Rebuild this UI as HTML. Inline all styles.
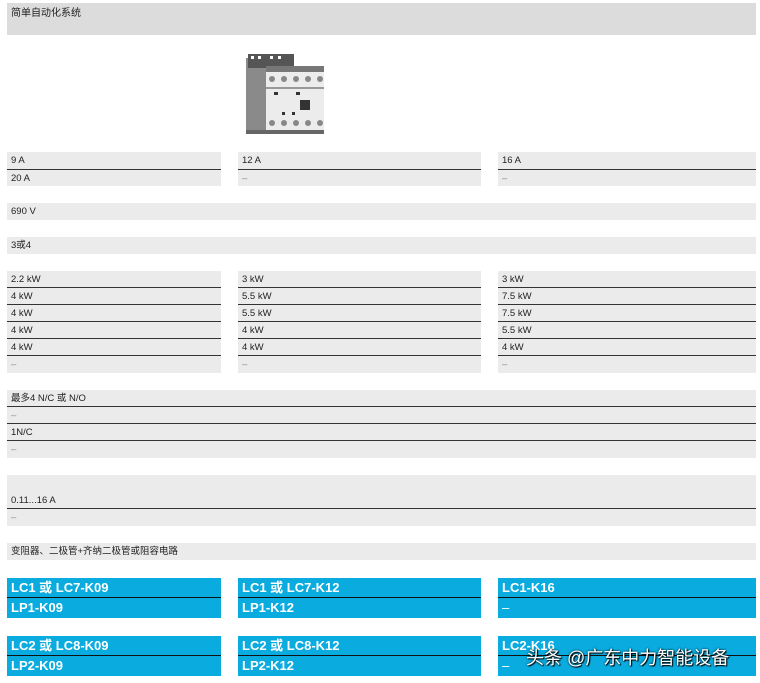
<!DOCTYPE html>
<html><head><meta charset="utf-8"><style>
*{margin:0;padding:0;box-sizing:border-box}
body{width:760px;height:683px;background:#fff;position:relative;overflow:hidden;font-family:"Liberation Sans","Noto Sans CJK SC",sans-serif;color:#222}
.r{position:absolute;background:#ebebeb;font-size:9.5px;padding:3px 0 0 4px;line-height:11px}
.b{border-bottom:1px solid #333}
.c1{left:7px;width:214px}.c2{left:238px;width:243px}.c3{left:498px;width:258px}.f{left:7px;width:749px}
.u{position:absolute;background:#0aabdf;color:#fff;font-weight:bold;font-size:13px;padding:2px 0 0 4px;line-height:16px}
.u.b{border-bottom:1px solid #111}
.d{color:#888}
</style></head><body>
<div class="r f" style="top:3px;height:32px;background:#dcdcdc;font-size:10px;padding-top:5px">简单自动化系统</div>
<svg style="position:absolute;left:244px;top:52px" width="84" height="86" viewBox="0 0 84 86">
<rect x="2" y="6" width="22" height="72" fill="#8a8a8a"/>
<rect x="4" y="2" width="46" height="14" fill="#555"/>
<rect x="7" y="4" width="3" height="3" fill="#fff"/><rect x="14" y="4" width="3" height="3" fill="#fff"/><rect x="26" y="4" width="3" height="3" fill="#fff"/><rect x="34" y="4" width="3" height="3" fill="#fff"/>
<rect x="22" y="14" width="58" height="66" fill="#ececec"/>
<rect x="22" y="14" width="58" height="6" fill="#777"/>
<g fill="#888"><circle cx="28" cy="27" r="3"/><circle cx="40" cy="27" r="3"/><circle cx="52" cy="27" r="3"/><circle cx="64" cy="27" r="3"/><circle cx="76" cy="27" r="3"/>
<circle cx="28" cy="71" r="3"/><circle cx="40" cy="71" r="3"/><circle cx="52" cy="71" r="3"/><circle cx="64" cy="71" r="3"/><circle cx="76" cy="71" r="3"/></g>
<rect x="22" y="35" width="58" height="2" fill="#999"/>
<rect x="30" y="40" width="4" height="3" fill="#333"/><rect x="52" y="40" width="4" height="3" fill="#333"/>
<rect x="56" y="48" width="10" height="10" fill="#333"/>
<rect x="38" y="60" width="3" height="3" fill="#333"/><rect x="48" y="60" width="3" height="3" fill="#333"/>
<rect x="2" y="78" width="78" height="4" fill="#666"/>
</svg>
<div class="r c1 b" style="top:152px;height:18px">9 A</div>
<div class="r c1" style="top:170px;height:16px">20 A</div>
<div class="r c2 b" style="top:152px;height:18px">12 A</div>
<div class="r c2 d" style="top:170px;height:16px">–</div>
<div class="r c3 b" style="top:152px;height:18px">16 A</div>
<div class="r c3 d" style="top:170px;height:16px">–</div>
<div class="r f" style="top:203px;height:17px">690 V</div>
<div class="r f" style="top:237px;height:17px">3或4</div>

<div class="r c1 b" style="top:271px;height:17px">2.2 kW</div>
<div class="r c1 b" style="top:288px;height:17px">4 kW</div>
<div class="r c1 b" style="top:305px;height:17px">4 kW</div>
<div class="r c1 b" style="top:322px;height:17px">4 kW</div>
<div class="r c1 b" style="top:339px;height:17px">4 kW</div>
<div class="r c1 d" style="top:356px;height:17px">–</div>
<div class="r c2 b" style="top:271px;height:17px">3 kW</div>
<div class="r c2 b" style="top:288px;height:17px">5.5 kW</div>
<div class="r c2 b" style="top:305px;height:17px">5.5 kW</div>
<div class="r c2 b" style="top:322px;height:17px">4 kW</div>
<div class="r c2 b" style="top:339px;height:17px">4 kW</div>
<div class="r c2 d" style="top:356px;height:17px">–</div>
<div class="r c3 b" style="top:271px;height:17px">3 kW</div>
<div class="r c3 b" style="top:288px;height:17px">7.5 kW</div>
<div class="r c3 b" style="top:305px;height:17px">7.5 kW</div>
<div class="r c3 b" style="top:322px;height:17px">5.5 kW</div>
<div class="r c3 b" style="top:339px;height:17px">4 kW</div>
<div class="r c3 d" style="top:356px;height:17px">–</div>

<div class="r f b" style="top:390px;height:17px">最多4 N/C 或 N/O</div>
<div class="r f b d" style="top:407px;height:17px">–</div>
<div class="r f b" style="top:424px;height:17px">1N/C</div>
<div class="r f d" style="top:441px;height:17px">–</div>
<div class="r f b" style="top:475px;height:34px;padding-top:20px">0.11...16 A</div>
<div class="r f d" style="top:509px;height:17px">–</div>
<div class="r f" style="top:543px;height:17px">变阻器、二极管+齐纳二极管或阻容电路</div>

<div class="u c1 b" style="top:578px;height:20px">LC1 或 LC7-K09</div>
<div class="u c1" style="top:598px;height:20px">LP1-K09</div>
<div class="u c2 b" style="top:578px;height:20px">LC1 或 LC7-K12</div>
<div class="u c2" style="top:598px;height:20px">LP1-K12</div>
<div class="u c3 b" style="top:578px;height:20px">LC1-K16</div>
<div class="u c3" style="top:598px;height:20px;font-weight:normal">–</div>
<div class="u c1 b" style="top:636px;height:20px">LC2 或 LC8-K09</div>
<div class="u c1" style="top:656px;height:20px">LP2-K09</div>
<div class="u c2 b" style="top:636px;height:20px">LC2 或 LC8-K12</div>
<div class="u c2" style="top:656px;height:20px">LP2-K12</div>
<div class="u c3 b" style="top:636px;height:20px">LC2-K16</div>
<div class="u c3" style="top:656px;height:20px;font-weight:normal">–</div>
<div style="position:absolute;left:526px;top:644px;font-size:18px;color:#fff;text-shadow:0 0 2px #000,1px 1px 1px #000;white-space:nowrap">头条 @广东中力智能设备</div>
</body></html>
